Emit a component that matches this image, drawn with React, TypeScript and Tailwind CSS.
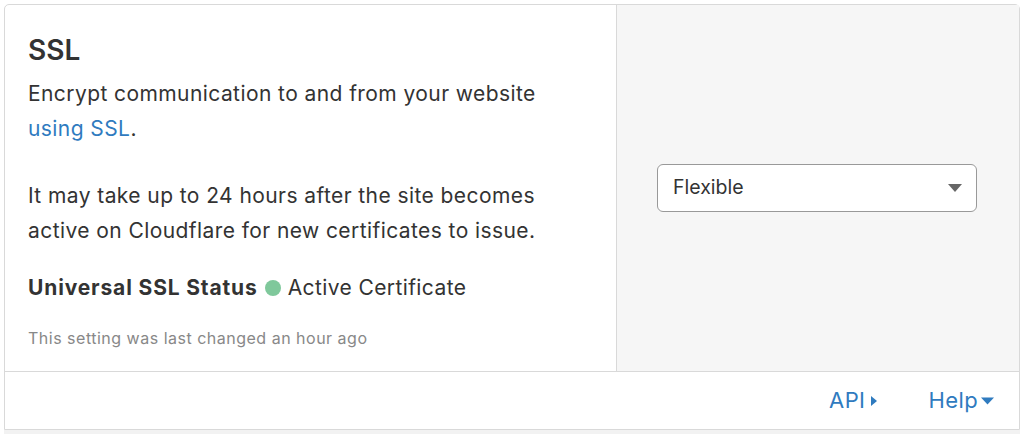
const FONT = { fontFamily: "Inter, 'Noto Sans', sans-serif" };

const Caret = ({ dir }: { dir: "right" | "down" }) =>
    dir === "right" ? (
        <svg width="8" height="12" viewBox="0 0 8 12" className="ml-[5px]">
            <path d="M1 1 L7 6 L1 11 Z" fill="currentColor" />
        </svg>
    ) : (
        <svg width="13" height="8" viewBox="0 0 13 8" className="ml-[3px]">
            <path d="M0 0.5 L13 0.5 L6.5 7.5 Z" fill="currentColor" />
        </svg>
    );

const App = () => {
    return (
        <div className="w-[1024px] h-[434px] bg-white overflow-hidden pt-[4px] pl-[4px]" style={FONT}>
            <div className="w-[1016px] border border-[#d9d9d9] rounded-t-[5px] bg-white">
                <div className="flex h-[366px]">
                    <div className="w-[611px] pl-[23px] pr-[20px] pt-[25px] text-[#333]">
                        <h2 className="text-[28px] leading-[40px] font-semibold text-[#333]">SSL</h2>
                        <p className="mt-[6px] text-[21px] leading-[35px] tracking-[0.42px] text-[#333]">
                            Encrypt communication to and from your website{" "}
                            <a className="text-[#2f7bbf]">using SSL</a>.
                        </p>
                        <p className="mt-[32px] text-[21px] leading-[35px] tracking-[0.42px] text-[#333]">
                            It may take up to 24 hours after the site becomes active on Cloudflare for new certificates to issue.
                        </p>
                        <div className="mt-[22px] flex items-center text-[21px] leading-[35px] tracking-[0.4px]">
                            <span className="font-bold tracking-[0.85px]">Universal SSL Status</span>
                            <span className="mx-[7px] w-[16px] h-[16px] rounded-full bg-[#7fc89b]" />
                            <span>Active Certificate</span>
                        </div>
                        <p className="mt-[21px] text-[16px] leading-[24px] tracking-[0.5px] text-[#888]">
                            This setting was last changed an hour ago
                        </p>
                    </div>
                    <div className="flex-1 bg-[#f6f6f6] border-l border-[#d9d9d9] flex items-center pl-[40px]">
                        <button className="w-[320px] h-[48px] bg-white border border-[#999] rounded-[6px] flex items-center justify-between pl-[15px] pr-[14px] text-[19.5px] text-[#333]">
                            <span>Flexible</span>
                            <svg width="14" height="8" viewBox="0 0 14 8">
                                <path d="M0 0 L14 0 L7 8 Z" fill="#666" />
                            </svg>
                        </button>
                    </div>
                </div>
                <div className="h-[58px] border-t border-[#d9d9d9] flex items-center justify-end pr-[25px] gap-[50px] text-[22px] tracking-[0.4px] text-[#2f7bbf]">
                    <a className="flex items-center">API<Caret dir="right" /></a>
                    <a className="flex items-center">Help<Caret dir="down" /></a>
                </div>
            </div>
            <div className="w-[1016px] h-[10px] bg-[#f2f2f2]" />
        </div>
    );
};

export default App;
